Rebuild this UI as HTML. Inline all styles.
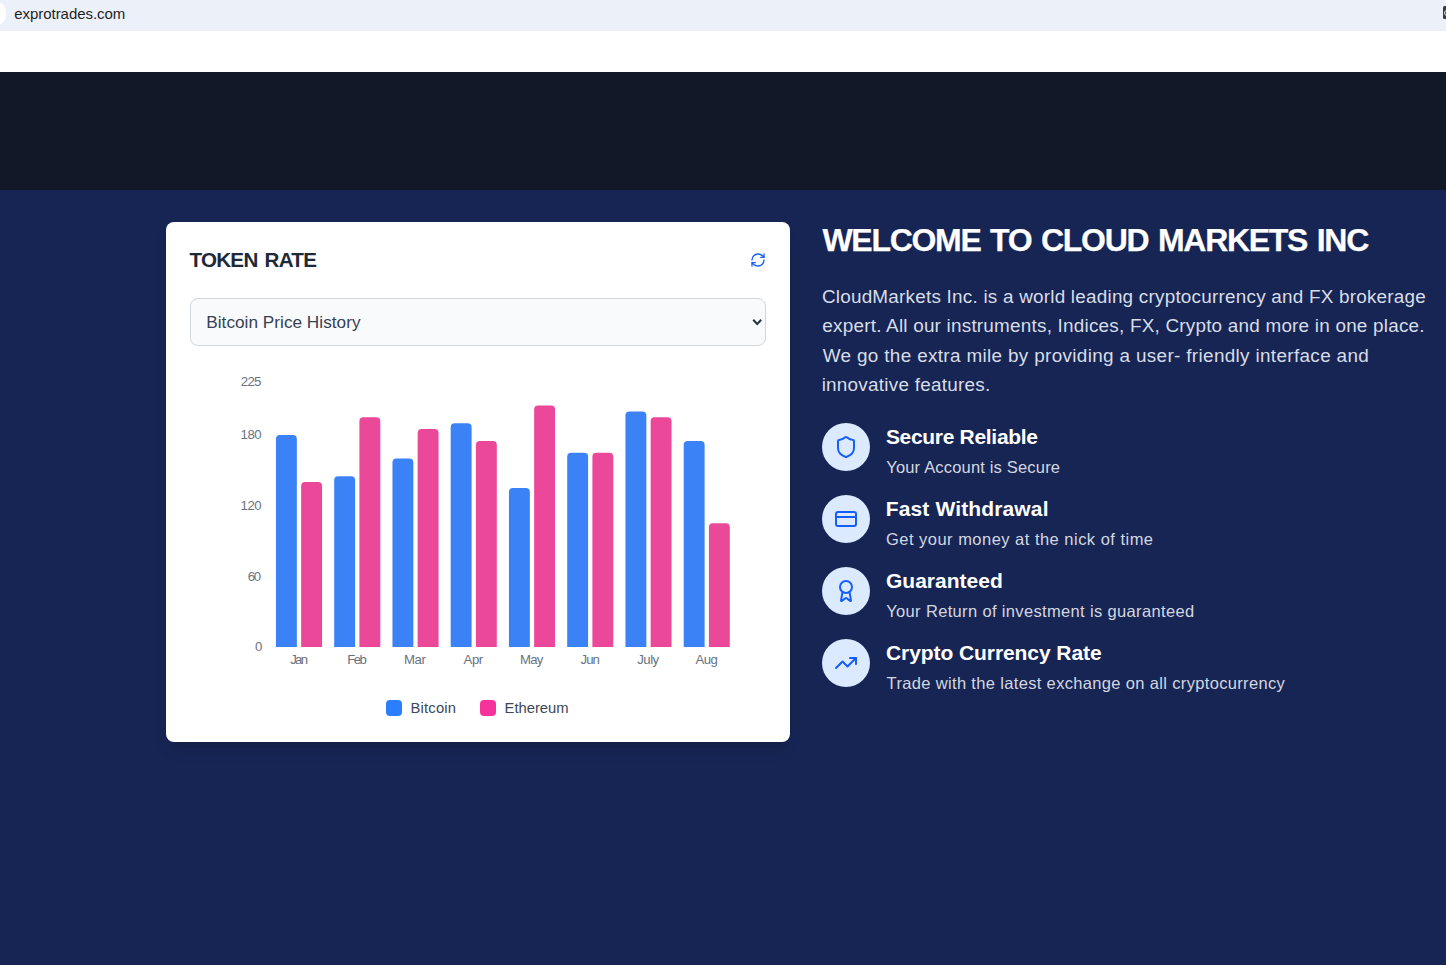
<!DOCTYPE html>
<html lang="en"><head><meta charset="utf-8"><title>Cloud Markets Inc</title>
<style>
*{margin:0;padding:0;box-sizing:border-box}
html,body{width:1446px;height:965px;overflow:hidden}
body{position:relative;background:#172554;font-family:"Liberation Sans",sans-serif}
.shape{position:absolute}
.t{position:absolute;white-space:nowrap;line-height:normal;font-family:"Liberation Sans",sans-serif}
#bar{left:0;top:0;width:1446px;height:31px;background:#ecf0f9}
#chip{left:-20px;top:2.3px;width:25.6px;height:22.4px;border-radius:9.5px;background:#fff}
#ext{left:1443px;top:6px;width:6px;height:13px;border-radius:1.5px;background:#3a3a3a}
#white{left:0;top:31px;width:1446px;height:41px;background:#fff}
#dark{left:0;top:72px;width:1446px;height:118px;background:#111828}
#card{left:166px;top:222px;width:624px;height:520px;border-radius:8px;background:#fff;box-shadow:0 10px 15px -3px rgba(0,0,0,.1),0 4px 6px -4px rgba(0,0,0,.1)}
#sel{left:190px;top:298px;width:576px;height:48px;border-radius:8px;background:#f9fafb;border:1px solid #d1d5dc}
.circ{left:822px;width:48px;height:48px;border-radius:50%;background:#dbeafe}
.ico{fill:none;stroke:#155dfc;stroke-width:2;stroke-linecap:round;stroke-linejoin:round}
.lg{width:16px;height:16px;border-radius:4px;top:700px}
#ext2{left:1444.2px;top:9.5px;width:6px;height:6px;border-radius:50%;border:1.2px solid #e8e8e8}


</style></head>
<body>
<div class="shape" id="bar"></div><div class="shape" id="chip"></div><div class="shape" id="ext"></div><div class="shape" id="ext2"></div>
<div class="shape" id="white"></div><div class="shape" id="dark"></div>
<div class="shape" id="card"></div>
<svg class="shape ico" style="left:750px;top:252px" width="16" height="16" viewBox="0 0 24 24"><path d="M3 12a9 9 0 0 1 9-9 9.75 9.75 0 0 1 6.74 2.74L21 8"/><path d="M21 3v5h-5"/><path d="M21 12a9 9 0 0 1-9 9 9.75 9.75 0 0 1-6.74-2.74L3 16"/><path d="M8 16H3v5"/></svg>
<div class="shape" id="sel"></div>
<svg class="shape" style="left:750px;top:316px" width="14" height="12" viewBox="0 0 14 12"><path d="M3.2 3.8L7.2 7.9L11.2 3.8" fill="none" stroke="#2a3444" stroke-width="2.1"/></svg>
<svg class="shape" style="left:0;top:0" width="1446" height="965" viewBox="0 0 1446 965"><path fill="#3b82f6" d="M275.95 647.00V439.00a4 4 0 0 1 4 -4h12.90a4 4 0 0 1 4 4V647.00z"/><path fill="#ec4899" d="M301.15 647.00V486.11a4 4 0 0 1 4 -4h12.90a4 4 0 0 1 4 4V647.00z"/><path fill="#3b82f6" d="M334.20 647.00V480.22a4 4 0 0 1 4 -4h12.90a4 4 0 0 1 4 4V647.00z"/><path fill="#ec4899" d="M359.40 647.00V421.33a4 4 0 0 1 4 -4h12.90a4 4 0 0 1 4 4V647.00z"/><path fill="#3b82f6" d="M392.45 647.00V462.56a4 4 0 0 1 4 -4h12.90a4 4 0 0 1 4 4V647.00z"/><path fill="#ec4899" d="M417.65 647.00V433.11a4 4 0 0 1 4 -4h12.90a4 4 0 0 1 4 4V647.00z"/><path fill="#3b82f6" d="M450.70 647.00V427.22a4 4 0 0 1 4 -4h12.90a4 4 0 0 1 4 4V647.00z"/><path fill="#ec4899" d="M475.90 647.00V444.89a4 4 0 0 1 4 -4h12.90a4 4 0 0 1 4 4V647.00z"/><path fill="#3b82f6" d="M508.95 647.00V492.00a4 4 0 0 1 4 -4h12.90a4 4 0 0 1 4 4V647.00z"/><path fill="#ec4899" d="M534.15 647.00V409.56a4 4 0 0 1 4 -4h12.90a4 4 0 0 1 4 4V647.00z"/><path fill="#3b82f6" d="M567.20 647.00V456.67a4 4 0 0 1 4 -4h12.90a4 4 0 0 1 4 4V647.00z"/><path fill="#ec4899" d="M592.40 647.00V456.67a4 4 0 0 1 4 -4h12.90a4 4 0 0 1 4 4V647.00z"/><path fill="#3b82f6" d="M625.45 647.00V415.44a4 4 0 0 1 4 -4h12.90a4 4 0 0 1 4 4V647.00z"/><path fill="#ec4899" d="M650.65 647.00V421.33a4 4 0 0 1 4 -4h12.90a4 4 0 0 1 4 4V647.00z"/><path fill="#3b82f6" d="M683.70 647.00V444.89a4 4 0 0 1 4 -4h12.90a4 4 0 0 1 4 4V647.00z"/><path fill="#ec4899" d="M708.90 647.00V527.33a4 4 0 0 1 4 -4h12.90a4 4 0 0 1 4 4V647.00z"/></svg>
<div class="shape lg" style="left:386.25px;background:#2b7fff"></div><div class="shape lg" style="left:480.25px;background:#f6339a"></div>
<div class="shape circ" style="top:423px"></div>
<svg class="shape ico" style="left:834px;top:435px" width="24" height="24" viewBox="0 0 24 24"><path d="M20 13c0 5-3.5 7.5-7.66 8.95a1 1 0 0 1-.67-.01C7.5 20.5 4 18 4 13V6a1 1 0 0 1 1-1c2 0 4.5-1.2 6.24-2.72a1.17 1.17 0 0 1 1.52 0C14.51 3.81 17 5 19 5a1 1 0 0 1 1 1z"/></svg>
<div class="shape circ" style="top:495px"></div>
<svg class="shape ico" style="left:834px;top:507px" width="24" height="24" viewBox="0 0 24 24"><rect width="20" height="14" x="2" y="5" rx="2"/><line x1="2" x2="22" y1="10" y2="10"/></svg>
<div class="shape circ" style="top:567px"></div>
<svg class="shape ico" style="left:834px;top:579px" width="24" height="24" viewBox="0 0 24 24"><path d="m15.477 12.89 1.515 8.526a.5.5 0 0 1-.81.47l-3.58-2.687a1 1 0 0 0-1.197 0l-3.586 2.686a.5.5 0 0 1-.81-.469l1.514-8.526"/><circle cx="12" cy="8" r="6"/></svg>
<div class="shape circ" style="top:639px"></div>
<svg class="shape ico" style="left:834px;top:651px" width="24" height="24" viewBox="0 0 24 24"><path d="M16 7h6v6"/><path d="m22 7-8.5 8.5-5-5L2 17"/></svg>
<span class="t" id="t0" style="left:14.22px;top:4.60px;font-size:15.0px;color:#1f1f1f;letter-spacing:-0.044px">exprotrades.com</span>
<span class="t" id="t1" style="left:189.43px;top:247.50px;font-size:20.6px;font-weight:700;color:#1e2939;letter-spacing:-0.720px;word-spacing:2.0px">TOKEN RATE</span>
<span class="t" id="t2" style="left:206.30px;top:311.50px;font-size:17.2px;color:#364153;letter-spacing:0.020px">Bitcoin Price History</span>
<span class="t" id="t3" style="left:240.80px;top:374.40px;font-size:13.2px;color:#6a7282;letter-spacing:-0.738px">225</span>
<span class="t" id="t4" style="left:240.60px;top:427.40px;font-size:13.2px;color:#6a7282;letter-spacing:-0.536px">180</span>
<span class="t" id="t5" style="left:240.60px;top:498.07px;font-size:13.2px;color:#6a7282;letter-spacing:-0.536px">120</span>
<span class="t" id="t6" style="left:247.82px;top:568.73px;font-size:13.2px;color:#6a7282;letter-spacing:-1.285px">60</span>
<span class="t" id="t7" style="left:255.05px;top:639.40px;font-size:13.2px;color:#6a7282;letter-spacing:-4.438px">0</span>
<span class="t" id="t8" style="left:290.14px;top:652.40px;font-size:13.2px;color:#6a7282;letter-spacing:-1.710px">Jan</span>
<span class="t" id="t9" style="left:347.18px;top:652.40px;font-size:13.2px;color:#6a7282;letter-spacing:-1.511px">Feb</span>
<span class="t" id="t10" style="left:403.99px;top:652.40px;font-size:13.2px;color:#6a7282;letter-spacing:-0.367px">Mar</span>
<span class="t" id="t11" style="left:463.56px;top:652.40px;font-size:13.2px;color:#6a7282;letter-spacing:-0.462px">Apr</span>
<span class="t" id="t12" style="left:519.88px;top:652.40px;font-size:13.2px;color:#6a7282;letter-spacing:-0.731px">May</span>
<span class="t" id="t13" style="left:580.55px;top:652.40px;font-size:13.2px;color:#6a7282;letter-spacing:-1.004px">Jun</span>
<span class="t" id="t14" style="left:637.30px;top:652.40px;font-size:13.2px;color:#6a7282;letter-spacing:-0.544px">July</span>
<span class="t" id="t15" style="left:695.56px;top:652.40px;font-size:13.2px;color:#6a7282;letter-spacing:-0.551px">Aug</span>
<span class="t" id="t16" style="left:410.55px;top:700.00px;font-size:14.8px;color:#3d4859;letter-spacing:0.173px">Bitcoin</span>
<span class="t" id="t17" style="left:504.55px;top:700.00px;font-size:14.8px;color:#3d4859;letter-spacing:-0.019px">Ethereum</span>
<span class="t" id="t18" style="left:822.41px;top:222.00px;font-size:32.0px;font-weight:700;color:#ffffff;letter-spacing:-1.286px;word-spacing:2.0px;-webkit-text-stroke:0.25px #ffffff">WELCOME TO CLOUD MARKETS INC</span>
<span class="t" id="t19" style="left:821.92px;top:286.00px;font-size:18.9px;color:#d8dde7;letter-spacing:0.222px">CloudMarkets Inc. is a world leading cryptocurrency and FX brokerage</span>
<span class="t" id="t20" style="left:822.36px;top:315.25px;font-size:18.9px;color:#d8dde7;letter-spacing:0.218px">expert. All our instruments, Indices, FX, Crypto and more in one place.</span>
<span class="t" id="t21" style="left:822.75px;top:344.50px;font-size:18.9px;color:#d8dde7;letter-spacing:0.339px">We go the extra mile by providing a user- friendly interface and</span>
<span class="t" id="t22" style="left:821.63px;top:373.75px;font-size:18.9px;color:#d8dde7;letter-spacing:0.251px">innovative features.</span>
<span class="t" id="t23" style="left:885.93px;top:425.20px;font-size:21.0px;font-weight:700;color:#ffffff;letter-spacing:-0.311px">Secure Reliable</span>
<span class="t" id="t24" style="left:886.22px;top:458.10px;font-size:16.5px;color:#d3d7e0;letter-spacing:0.180px">Your Account is Secure</span>
<span class="t" id="t25" style="left:885.77px;top:497.20px;font-size:21.0px;font-weight:700;color:#ffffff;letter-spacing:0.135px">Fast Withdrawal</span>
<span class="t" id="t26" style="left:885.99px;top:530.10px;font-size:16.5px;color:#d3d7e0;letter-spacing:0.478px">Get your money at the nick of time</span>
<span class="t" id="t27" style="left:885.94px;top:569.20px;font-size:21.0px;font-weight:700;color:#ffffff;letter-spacing:0.017px">Guaranteed</span>
<span class="t" id="t28" style="left:886.22px;top:602.10px;font-size:16.5px;color:#d3d7e0;letter-spacing:0.347px">Your Return of investment is guaranteed</span>
<span class="t" id="t29" style="left:885.95px;top:641.20px;font-size:21.0px;font-weight:700;color:#ffffff;letter-spacing:-0.070px">Crypto Currency Rate</span>
<span class="t" id="t30" style="left:886.61px;top:674.10px;font-size:16.5px;color:#d3d7e0;letter-spacing:0.339px">Trade with the latest exchange on all cryptocurrency</span>
</body></html>
